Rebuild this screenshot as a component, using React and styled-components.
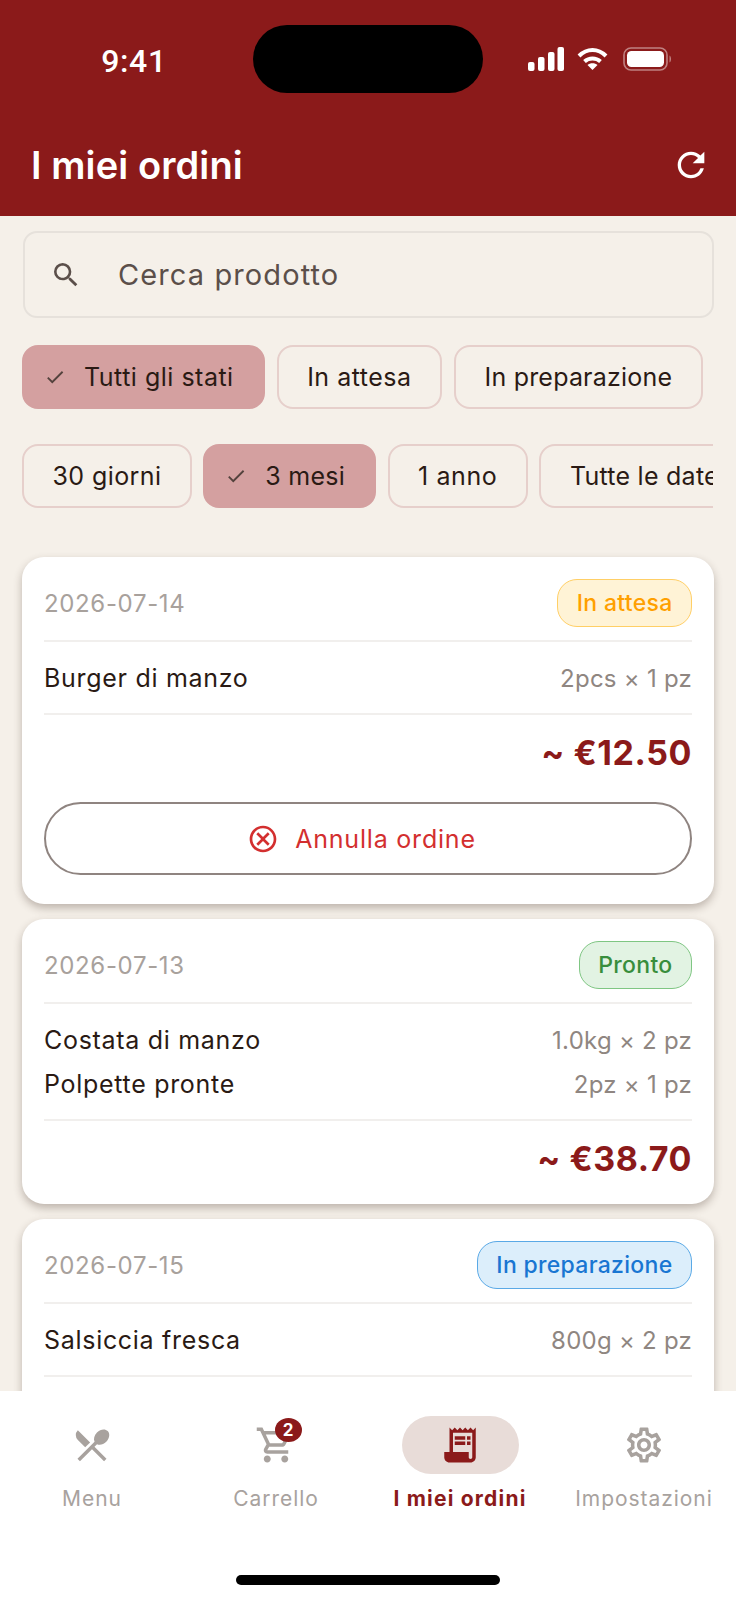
import React from "react";
import styled, { createGlobalStyle } from "styled-components";
import { MdRefresh, MdSearch, MdCheck, MdOutlineCancel, MdRestaurantMenu, MdOutlineShoppingCart, MdReceiptLong, MdOutlineSettings } from "react-icons/md";

const Global = createGlobalStyle`
  html, body { margin: 0; padding: 0; background: #f5f0e9; }
  * { box-sizing: border-box; }
  body { font-family: Inter, "Noto Sans", sans-serif; }
`;

const Phone = styled.div`
  width: 736px; height: 1600px; display: flex; flex-direction: column; overflow: hidden; background: #f5f0e9;
`;
const Header = styled.header`
  height: 216px; flex: none; background: #8b1a1a; color: #fff; display: flex; flex-direction: column;
`;
const StatusBar = styled.div`
  display: grid; grid-template-columns: 253px 230px 1fr; padding-top: 25px; height: 125px;
`;
const Time = styled.div`
  font: 500 32px/72px Roboto, Arial, sans-serif; text-align: center; padding-left: 15px; letter-spacing: 0.6px;
`;
const Island = styled.div`
  height: 68px; background: #000; border-radius: 34px;
`;
const StatusIcons = styled.div`
  display: flex; align-items: center; height: 68px; padding-left: 45px; gap: 13px;
  svg:last-child { margin-left: 2px; }
`;
const TitleRow = styled.div`
  display: flex; align-items: center; justify-content: space-between; padding: 0 25px 0 31px; height: 80px; margin-top: 0;
  margin-bottom: -3px;
`;
const Title = styled.h1`
  margin: 0; font-size: 38px; font-weight: 600; letter-spacing: 0.1px; line-height: 1;
`;
const Content = styled.main`
  flex: 1; min-height: 0; overflow: hidden; padding: 15px 22px 0 23px;
`;
const Search = styled.div`
  height: 87px; border: 2px solid #e6e1db; border-radius: 14px; display: flex; align-items: center; padding-left: 25px; gap: 36px;
  color: #5b4f4a; font-size: 29px; letter-spacing: 1.1px; padding-bottom: 0;
  svg { flex: none; }
`;
const ChipRow = styled.div`
  display: flex; gap: ${p => p.$gap}px; margin-top: ${p => p.$top}px; overflow: hidden; width: 691px; margin-left: -1px;
`;
const Chip = styled.div`
  height: 64px; flex: none; border-radius: 16px; display: flex; align-items: center; gap: 18px;
  padding: 0 ${p => p.$on ? 29 : 28.5}px 0 ${p => p.$on ? 20 : 28.5}px;
  border: 2px solid ${p => p.$on ? "#d4a0a0" : "#e6cfcb"};
  background: ${p => p.$on ? "#d4a0a0" : "transparent"};
  color: #2a1a14; font-size: 25px; letter-spacing: ${p => p.$track}px;
  white-space: nowrap;
  svg { color: #54423d; }
`;
const Orders = styled.div`
  margin-top: 49px; margin-left: -1px; display: flex; flex-direction: column; gap: 15px;
`;
const Card = styled.section`
  background: #fff; width: 692px; border-radius: 22px; padding: 22px 22px ${p => p.$bottom}px;
  box-shadow: 0 4px 8px rgba(60, 40, 30, 0.3);
`;
const CardTop = styled.div`
  display: flex; align-items: center; justify-content: space-between; height: 48px;
`;
const DateText = styled.span`
  color: #a8a19c; font-size: 24px; letter-spacing: 0.65px; padding-top: 1px;
`;
const tones = {
  wait: ["#fff3d6", "#ffcf66", "#ffa000"],
  ready: ["#e2f3e3", "#7fc683", "#388e3c"],
  prep: ["#dceefb", "#5aa9e6", "#1976d2"],
};
const Badge = styled.span`
  height: 48px; padding: 0 18.5px; border-radius: 20px; display: flex; align-items: center; font-size: 23px; font-weight: 500; letter-spacing: 0.3px;
  background: ${p => tones[p.$tone][0]};
  border: 1.5px solid ${p => tones[p.$tone][1]};
  color: ${p => tones[p.$tone][2]};
`;
const Divider = styled.div`
  height: 2px; background: #f1efed; margin-top: ${p => p.$top || 0}px;
`;
const Items = styled.div`
  padding: 14px 0 13px;
`;
const Item = styled.div`
  display: flex; align-items: center; justify-content: space-between; height: 44px;
`;
const ItemName = styled.span`
  color: #2a1a14; font-size: 25px; letter-spacing: 0.7px;
`;
const ItemQty = styled.span`
  color: #8f8681; font-size: 24px; letter-spacing: 0.25px;
`;
const Total = styled.div`
  text-align: right; color: #8b1a1a; font-size: 34px; font-weight: 700; letter-spacing: 0.55px; height: 75px; line-height: 75px;
`;
const CancelButton = styled.button`
  width: 100%; height: 73px; margin-top: 12px; background: #fff; border: 2px solid #8f8480; border-radius: 37px;
  display: flex; align-items: center; justify-content: center; gap: 16px; padding: 0 13px 0 0;
  color: #d32f2f; font: 400 25px Inter, sans-serif; letter-spacing: 0.8px;
`;
const Nav = styled.nav`
  height: 209px; flex: none; background: #fff; position: relative; display: grid; grid-template-columns: repeat(4, 184px); align-content: start; padding-top: 25px; z-index: 2;
`;
const Tab = styled.div`
  display: flex; flex-direction: column; align-items: center;
  color: ${p => p.$on ? "#8b1a1a" : "#a8a29e"};
`;
const IconPill = styled.div`
  width: 117px; height: 58px; border-radius: 29px; display: flex; align-items: center; justify-content: center; position: relative;
  background: ${p => p.$on ? "#e8dcd8" : "transparent"};
`;
const CartBadge = styled.span`
  position: absolute; left: 57px; top: 2px; width: 27px; height: 24px; border-radius: 50%; background: #8b1a1a; color: #fff;
  font-size: 17px; font-weight: 700; display: flex; align-items: center; justify-content: center;
`;
const TabLabel = styled.span`
  margin-top: 10px; font-size: 21px; line-height: 30px; letter-spacing: ${p => p.$on ? 1.2 : 0.95}px; white-space: nowrap;
  font-weight: ${p => p.$on ? 700 : 400};
`;
const HomeBar = styled.div`
  position: absolute; left: 236px; bottom: 15px; width: 264px; height: 10px; border-radius: 5px; background: #000;
`;

const Signal = () => (
  <svg width="36" height="24" viewBox="0 0 36 24" fill="#fff">
    <rect x="0" y="15" width="6.5" height="9" rx="2" />
    <rect x="10" y="10" width="6.5" height="14" rx="2" />
    <rect x="20" y="5" width="6.5" height="19" rx="2" />
    <rect x="29.5" y="0" width="6.5" height="24" rx="2" />
  </svg>
);
const Wifi = () => (
  <svg width="31" height="24" viewBox="0 0 31 24" fill="none" stroke="#fff" strokeWidth="4">
    <path d="M2 9 C10 1 21 1 29 9" />
    <path d="M7.5 14.5 C12 10.5 19 10.5 23.500 14.500" />
    <path d="M15.500 23 L10.500 18 C13 15.500 18 15.500 20.500 18 Z" fill="#fff" stroke="none" />
  </svg>
);
const Battery = () => (
  <svg width="50" height="24" viewBox="0 0 50 24" fill="none">
    <rect x="1" y="1" width="43" height="22" rx="7" stroke="#fff" strokeOpacity="0.45" strokeWidth="1.6" />
    <rect x="4" y="4" width="37" height="16" rx="4.500" fill="#fff" />
    <path d="M46.500 8.500 C48.500 9.500 48.500 14.500 46.500 15.500 Z" fill="#fff" fillOpacity="0.45" />
  </svg>
);

const orders = [
  { date: "2026-07-14", tone: "wait", status: "In attesa", items: [["Burger di manzo", "2pcs × 1 pz"]], total: "~ €12.50", cancel: true },
  { date: "2026-07-13", tone: "ready", status: "Pronto", items: [["Costata di manzo", "1.0kg × 2 pz"], ["Polpette pronte", "2pz × 1 pz"]], total: "~ €38.70" },
  { date: "2026-07-15", tone: "prep", status: "In preparazione", items: [["Salsiccia fresca", "800g × 2 pz"]], total: "~ €22.40" },
];
const statusChips = [["Tutti gli stati", true, 0.5], ["In attesa", false, 0.5], ["In preparazione", false, 0.2], ["Pronto", false, 0.25]];
const dateChips = [["30 giorni", false, 0.4], ["3 mesi", true, 0.25], ["1 anno", false, 0.6], ["Tutte le date", false, 0.25]];
const tabs = [
  ["Menu", MdRestaurantMenu],
  ["Carrello", MdOutlineShoppingCart, "2"],
  ["I miei ordini", MdReceiptLong, null, true],
  ["Impostazioni", MdOutlineSettings],
];

const ChipList = ({ chips, top, gap }) => (
  <ChipRow $top={top} $gap={gap}>
    {chips.map(([label, on, track]) => (
      <Chip key={label} $on={on} $track={track}>
        {on && <MdCheck size={22} />}
        {label}
      </Chip>
    ))}
  </ChipRow>
);

export default function App() {
  return (
    <Phone>
      <Global />
      <Header>
        <StatusBar>
          <Time>9:41</Time>
          <Island />
          <StatusIcons><Signal /><Wifi /><Battery /></StatusIcons>
        </StatusBar>
        <TitleRow>
          <Title>I miei ordini</Title>
          <MdRefresh size={40} />
        </TitleRow>
      </Header>
      <Content>
        <Search><MdSearch size={32} />Cerca prodotto</Search>
        <ChipList chips={statusChips} top={27} gap={12} />
        <ChipList chips={dateChips} top={35} gap={11.5} />
        <Orders>
          {orders.map(o => (
            <Card key={o.date} $bottom={o.cancel ? 29 : 8}>
              <CardTop>
                <DateText>{o.date}</DateText>
                <Badge $tone={o.tone}>{o.status}</Badge>
              </CardTop>
              <Divider $top={13} />
              <Items>
                {o.items.map(([n, q]) => (
                  <Item key={n}><ItemName>{n}</ItemName><ItemQty>{q}</ItemQty></Item>
                ))}
              </Items>
              <Divider />
              <Total>{o.total}</Total>
              {o.cancel && <CancelButton><MdOutlineCancel size={32} />Annulla ordine</CancelButton>}
            </Card>
          ))}
        </Orders>
      </Content>
      <Nav>
        {tabs.map(([label, Icon, badge, on]) => (
          <Tab key={label} $on={on}>
            <IconPill $on={on}>
              <Icon size={42} />
              {badge && <CartBadge>{badge}</CartBadge>}
            </IconPill>
            <TabLabel $on={on}>{label}</TabLabel>
          </Tab>
        ))}
        <HomeBar />
      </Nav>
    </Phone>
  );
}
